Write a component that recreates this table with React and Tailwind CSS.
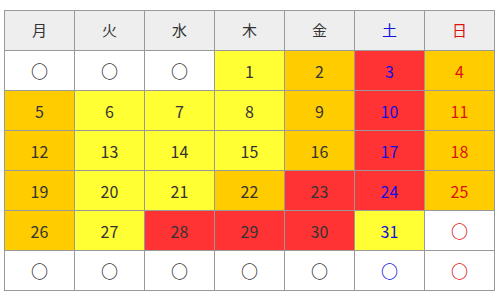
const days = ['月', '火', '水', '木', '金', '土', '日'];

// o = orange, y = yellow, r = red, w = white
const weeks = [
  [['○', 'w'], ['○', 'w'], ['○', 'w'], ['1', 'y'], ['2', 'o'], ['3', 'r'], ['4', 'o']],
  [['5', 'o'], ['6', 'y'], ['7', 'y'], ['8', 'y'], ['9', 'o'], ['10', 'r'], ['11', 'o']],
  [['12', 'o'], ['13', 'y'], ['14', 'y'], ['15', 'y'], ['16', 'o'], ['17', 'r'], ['18', 'o']],
  [['19', 'o'], ['20', 'y'], ['21', 'y'], ['22', 'o'], ['23', 'r'], ['24', 'r'], ['25', 'o']],
  [['26', 'o'], ['27', 'y'], ['28', 'r'], ['29', 'r'], ['30', 'r'], ['31', 'y'], ['○', 'w']],
  [['○', 'w'], ['○', 'w'], ['○', 'w'], ['○', 'w'], ['○', 'w'], ['○', 'w'], ['○', 'w']],
];

const bg = {
  o: 'bg-[#ffcc00]',
  y: 'bg-[#ffff33]',
  r: 'bg-[#ff3333]',
  w: 'bg-white',
};

const textColor = (col) => {
  if (col === 5) return 'text-[#1010e0]';
  if (col === 6) return 'text-[#dd1111]';
  return 'text-[#333333]';
};

export default function App() {
  return (
    <div className="w-[500px] h-[300px] bg-white pt-[10px] pl-[4px] font-['Noto_Sans_CJK_JP','Noto_Sans',sans-serif]">
      <div className="grid grid-cols-[repeat(7,70px)] w-[491px] border-l border-t border-[#999999]">
        {days.map((d, i) => (
          <div
            key={d}
            className={`h-[40px] flex items-center justify-center border-r border-b border-[#999999] bg-[#eeeeee] text-[15px] ${textColor(i)}`}
          >
            {d}
          </div>
        ))}
        {weeks.map((week, wi) =>
          week.map(([label, c], i) => (
            <div
              key={`${wi}-${i}`}
              className={`h-[40px] flex items-center justify-center border-r border-b border-[#999999] ${bg[c]} ${textColor(i)} ${
                label === '○' ? 'text-[17px] font-bold' : 'text-[16px]'
              }`}
            >
              {label}
            </div>
          ))
        )}
      </div>
    </div>
  );
}
